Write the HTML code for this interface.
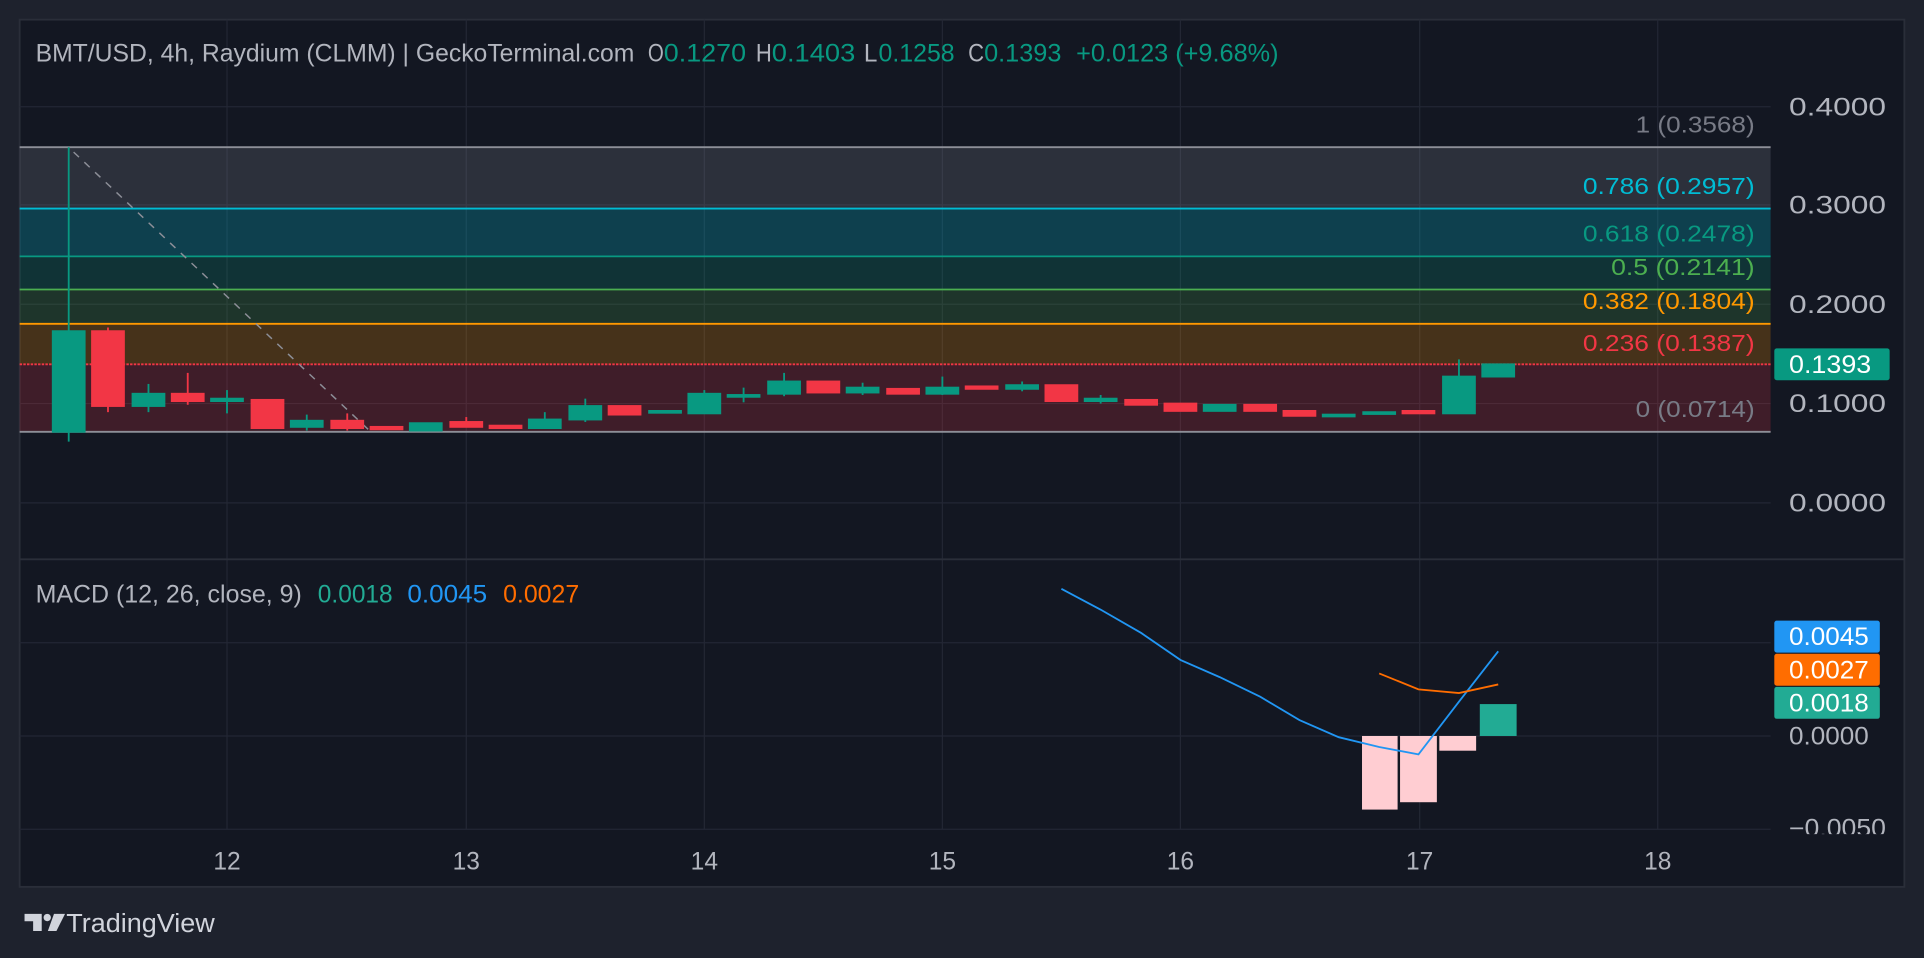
<!DOCTYPE html>
<html><head><meta charset="utf-8"><style>
html,body{margin:0;padding:0;background:#1e222d;width:1924px;height:958px;overflow:hidden}
svg{display:block}
text{font-family:"Liberation Sans",sans-serif}
</style></head><body>
<svg width="1924" height="958" viewBox="0 0 1568 781" preserveAspectRatio="none" xmlns="http://www.w3.org/2000/svg">
<rect x="0" y="0" width="1568" height="781" fill="#1e222d"/>
<rect x="16" y="16" width="1536" height="707" fill="#131722" stroke="#2a2e39" stroke-width="1.5"/>
<g stroke="#232734" stroke-width="1">
<line x1="185" y1="16" x2="185" y2="676"/><line x1="380" y1="16" x2="380" y2="676"/><line x1="574" y1="16" x2="574" y2="676"/><line x1="768" y1="16" x2="768" y2="676"/><line x1="962" y1="16" x2="962" y2="676"/><line x1="1157" y1="16" x2="1157" y2="676"/><line x1="1351" y1="16" x2="1351" y2="676"/>
<line x1="16" y1="87" x2="1443" y2="87"/><line x1="16" y1="167" x2="1443" y2="167"/><line x1="16" y1="248" x2="1443" y2="248"/><line x1="16" y1="329" x2="1443" y2="329"/><line x1="16" y1="410" x2="1443" y2="410"/>
<line x1="16" y1="524" x2="1443" y2="524"/><line x1="16" y1="600" x2="1443" y2="600"/><line x1="16" y1="676" x2="1443" y2="676"/>
</g>
<line x1="16" y1="456" x2="1552" y2="456" stroke="#2a2e39" stroke-width="1.5"/>
<rect x="16" y="120" width="1427" height="50" fill="#787b86" fill-opacity="0.25"/>
<rect x="16" y="170" width="1427" height="39" fill="#00bcd4" fill-opacity="0.25"/>
<rect x="16" y="209" width="1427" height="27" fill="#089981" fill-opacity="0.22"/>
<rect x="16" y="236" width="1427" height="28" fill="#4caf50" fill-opacity="0.2"/>
<rect x="16" y="264" width="1427" height="33" fill="#ff9800" fill-opacity="0.22"/>
<rect x="16" y="297" width="1427" height="55" fill="#f23645" fill-opacity="0.2"/>
<line x1="16" y1="120" x2="1443" y2="120" stroke="#8d8f98" stroke-width="1.5"/>
<line x1="16" y1="170" x2="1443" y2="170" stroke="#00bcd4" stroke-width="1.5"/>
<line x1="16" y1="209" x2="1443" y2="209" stroke="#089981" stroke-width="1.5"/>
<line x1="16" y1="236" x2="1443" y2="236" stroke="#4caf50" stroke-width="1.5"/>
<line x1="16" y1="264" x2="1443" y2="264" stroke="#ff9800" stroke-width="1.5"/>
<line x1="16" y1="297" x2="1443" y2="297" stroke="#f23645" stroke-width="1.5" stroke-dasharray="2 1"/>
<line x1="16" y1="352" x2="1443" y2="352" stroke="#8d8f98" stroke-width="1.5"/>
<line x1="60" y1="124" x2="300" y2="350" stroke="#8d8f98" stroke-width="1.2" stroke-dasharray="6 6"/>
<g font-size="19">
<text x="1333" y="108" fill="#787b86" textLength="97" lengthAdjust="spacingAndGlyphs">1 (0.3568)</text>
<text x="1290" y="158" fill="#00bcd4" textLength="140" lengthAdjust="spacingAndGlyphs">0.786 (0.2957)</text>
<text x="1290" y="197" fill="#089981" textLength="140" lengthAdjust="spacingAndGlyphs">0.618 (0.2478)</text>
<text x="1313" y="224" fill="#4caf50" textLength="117" lengthAdjust="spacingAndGlyphs">0.5 (0.2141)</text>
<text x="1290" y="252" fill="#ff9800" textLength="140" lengthAdjust="spacingAndGlyphs">0.382 (0.1804)</text>
<text x="1290" y="286" fill="#f23645" textLength="140" lengthAdjust="spacingAndGlyphs">0.236 (0.1387)</text>
<text x="1333" y="340" fill="#787b86" textLength="97" lengthAdjust="spacingAndGlyphs">0 (0.0714)</text>
</g>
<g stroke-width="1.5">
<g fill="#089981" stroke="#089981">
<line x1="56" y1="120" x2="56" y2="360"/><rect x="43" y="270" width="26" height="82"/>
<line x1="121" y1="313" x2="121" y2="336"/><rect x="108" y="321" width="26" height="10"/>
<line x1="185" y1="318" x2="185" y2="337"/><rect x="172" y="325" width="26" height="2"/>
<line x1="250" y1="338" x2="250" y2="351"/><rect x="237" y="343" width="26" height="5"/>
<rect x="334" y="345" width="26" height="6"/>
<line x1="444" y1="336" x2="444" y2="349"/><rect x="431" y="342" width="26" height="7"/>
<line x1="477" y1="325" x2="477" y2="344"/><rect x="464" y="331" width="26" height="11"/>
<rect x="529" y="335" width="26" height="1.5"/>
<line x1="574" y1="318" x2="574" y2="337"/><rect x="561" y="321" width="26" height="16"/>
<line x1="606" y1="316" x2="606" y2="328"/><rect x="593" y="322" width="26" height="1.5"/>
<line x1="639" y1="304" x2="639" y2="323"/><rect x="626" y="311" width="26" height="10"/>
<line x1="703" y1="312" x2="703" y2="322"/><rect x="690" y="316" width="26" height="4"/>
<line x1="768" y1="307" x2="768" y2="322"/><rect x="755" y="316" width="26" height="5"/>
<line x1="833" y1="311" x2="833" y2="319"/><rect x="820" y="314" width="26" height="3"/>
<line x1="897" y1="322" x2="897" y2="329"/><rect x="884" y="325" width="26" height="2"/>
<rect x="981" y="330" width="26" height="5"/>
<rect x="1078" y="338" width="26" height="1.5"/>
<rect x="1111" y="336" width="26" height="1.5"/>
<line x1="1189" y1="293" x2="1189" y2="337"/><rect x="1176" y="307" width="26" height="30"/>
<rect x="1208" y="297" width="26" height="10"/>
</g>
<g fill="#f23645" stroke="#f23645">
<line x1="88" y1="267" x2="88" y2="336"/><rect x="75" y="270" width="26" height="61"/>
<line x1="153" y1="304" x2="153" y2="330"/><rect x="140" y="321" width="26" height="6"/>
<rect x="205" y="326" width="26" height="23"/>
<line x1="283" y1="337" x2="283" y2="351"/><rect x="270" y="343" width="26" height="6"/>
<rect x="302" y="348" width="26" height="2"/>
<line x1="380" y1="340" x2="380" y2="348"/><rect x="367" y="344" width="26" height="4"/>
<rect x="399" y="347" width="26" height="2"/>
<rect x="496" y="331" width="26" height="7"/>
<rect x="658" y="311" width="26" height="9"/>
<rect x="723" y="317" width="26" height="4"/>
<rect x="787" y="315" width="26" height="2"/>
<rect x="852" y="314" width="26" height="13"/>
<rect x="917" y="326" width="26" height="4"/>
<rect x="949" y="329" width="26" height="6"/>
<rect x="1014" y="330" width="26" height="5"/>
<rect x="1046" y="335" width="26" height="4"/>
<rect x="1143" y="335" width="26" height="2"/>
</g>
</g>
<g font-size="20" fill="#b2b5be">
<text x="1458" y="94" textLength="79" lengthAdjust="spacingAndGlyphs">0.4000</text><text x="1458" y="174" textLength="79" lengthAdjust="spacingAndGlyphs">0.3000</text><text x="1458" y="255" textLength="79" lengthAdjust="spacingAndGlyphs">0.2000</text><text x="1458" y="336" textLength="79" lengthAdjust="spacingAndGlyphs">0.1000</text><text x="1458" y="417" textLength="79" lengthAdjust="spacingAndGlyphs">0.0000</text>
</g>
<rect x="1446" y="284" width="94" height="26" rx="2" fill="#089981"/>
<text x="1458" y="304" font-size="20" fill="#fff" textLength="67" lengthAdjust="spacingAndGlyphs">0.1393</text>
<g font-size="20">
<text x="29" y="50" fill="#b2b5be" textLength="488" lengthAdjust="spacingAndGlyphs">BMT/USD, 4h, Raydium (CLMM) | GeckoTerminal.com</text>
<text x="528" y="50" fill="#b2b5be" textLength="13" lengthAdjust="spacingAndGlyphs">O</text><text x="541" y="50" fill="#089981" textLength="67" lengthAdjust="spacingAndGlyphs">0.1270</text>
<text x="616" y="50" fill="#b2b5be" textLength="13" lengthAdjust="spacingAndGlyphs">H</text><text x="629" y="50" fill="#089981" textLength="68" lengthAdjust="spacingAndGlyphs">0.1403</text>
<text x="704" y="50" fill="#b2b5be" textLength="11" lengthAdjust="spacingAndGlyphs">L</text><text x="716" y="50" fill="#089981" textLength="62" lengthAdjust="spacingAndGlyphs">0.1258</text>
<text x="789" y="50" fill="#b2b5be" textLength="13" lengthAdjust="spacingAndGlyphs">C</text><text x="802" y="50" fill="#089981" textLength="63" lengthAdjust="spacingAndGlyphs">0.1393</text>
<text x="877" y="50" fill="#089981" textLength="165" lengthAdjust="spacingAndGlyphs">+0.0123 (+9.68%)</text>
<text x="29" y="491" fill="#b2b5be" textLength="217" lengthAdjust="spacingAndGlyphs">MACD (12, 26, close, 9)</text>
<text x="259" y="491" fill="#22ab94" textLength="61" lengthAdjust="spacingAndGlyphs">0.0018</text>
<text x="332" y="491" fill="#2196f3" textLength="65" lengthAdjust="spacingAndGlyphs">0.0045</text>
<text x="410" y="491" fill="#ff6d00" textLength="62" lengthAdjust="spacingAndGlyphs">0.0027</text>
</g>
<rect x="1110" y="600" width="29" height="60" fill="#ffcdd2"/>
<rect x="1141" y="600" width="30" height="54" fill="#ffcdd2"/>
<rect x="1173" y="600" width="30" height="12" fill="#ffcdd2"/>
<rect x="1206" y="574" width="30" height="26" fill="#22ab94"/>
<polyline fill="none" stroke="#2196f3" stroke-width="1.5" points="865,480 897,497 930,516 962,538 994,552 1027,568 1059,587 1091,601 1124,609 1156,615 1189,572 1221,531"/>
<polyline fill="none" stroke="#ff6d00" stroke-width="1.5" points="1124,549 1156,562 1189,565 1221,558"/>
<rect x="1446" y="506" width="86" height="26" rx="2" fill="#2196f3"/>
<rect x="1446" y="533" width="86" height="26" rx="2" fill="#ff6d00"/>
<rect x="1446" y="560" width="86" height="26" rx="2" fill="#22ab94"/>
<g font-size="20" fill="#fff">
<text x="1458" y="526" textLength="65" lengthAdjust="spacingAndGlyphs">0.0045</text><text x="1458" y="553" textLength="65" lengthAdjust="spacingAndGlyphs">0.0027</text><text x="1458" y="580" textLength="65" lengthAdjust="spacingAndGlyphs">0.0018</text>
</g>
<text x="1458" y="607" font-size="20" fill="#b2b5be" textLength="65" lengthAdjust="spacingAndGlyphs">0.0000</text>
<svg x="1440" y="656" width="112" height="24" overflow="hidden"><text x="18" y="26" font-size="20" fill="#b2b5be" textLength="79" lengthAdjust="spacingAndGlyphs">−0.0050</text></svg>
<g font-size="20" fill="#b2b5be" text-anchor="middle">
<text x="185" y="709">12</text><text x="380" y="709">13</text><text x="574" y="709">14</text><text x="768" y="709">15</text><text x="962" y="709">16</text><text x="1157" y="709">17</text><text x="1351" y="709">18</text>
</g>
<g fill="#d1d4dc">
<path d="M20 745 h14 v14 h-7 v-8 h-7z"/>
<circle cx="38.5" cy="748" r="3"/>
<path d="M44 745 h9 l-7 14 h-7z"/>
</g>
<text x="54" y="760" font-size="21" fill="#d1d4dc" textLength="121" lengthAdjust="spacingAndGlyphs">TradingView</text>
</svg>
</body></html>
